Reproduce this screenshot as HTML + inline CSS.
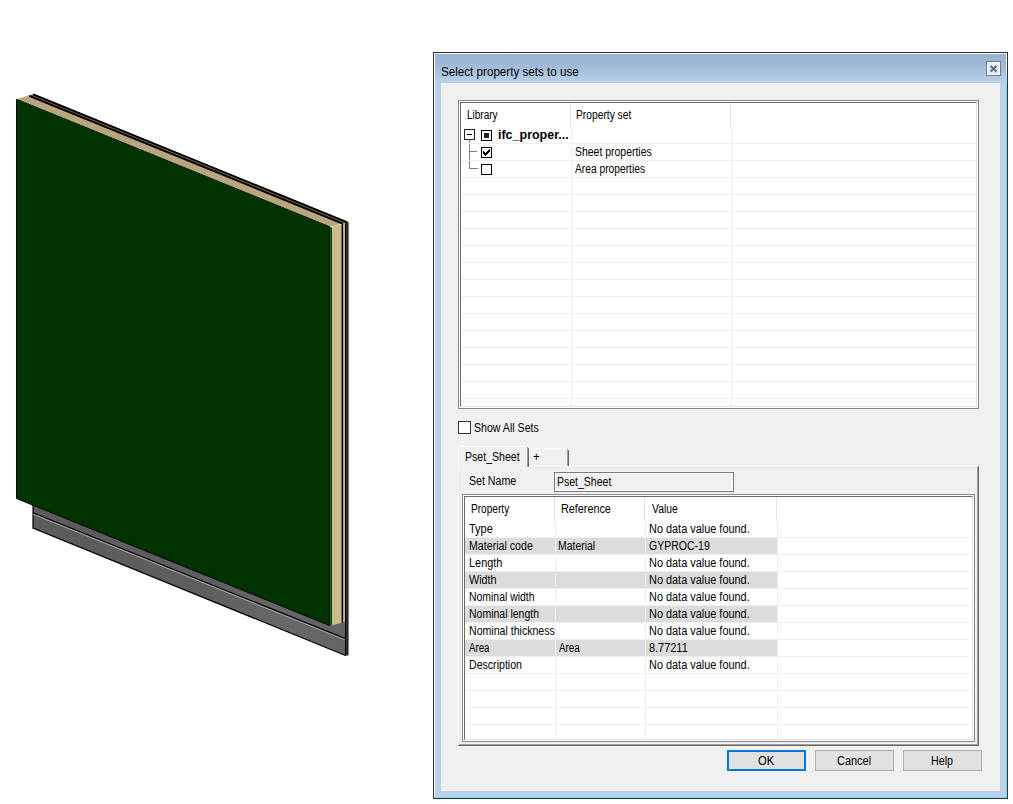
<!DOCTYPE html>
<html><head><meta charset="utf-8"><title>Select property sets to use</title>
<style>
html,body{margin:0;padding:0;background:#fff;}
body{width:1013px;height:804px;position:relative;overflow:hidden;font-family:"Liberation Sans",sans-serif;font-size:11px;color:#000;}
.a{position:absolute;}
.t{position:absolute;white-space:nowrap;line-height:13px;height:13px;font-size:12px;transform-origin:0 0;}
.hl{position:absolute;height:1px;background:#efefef;}
.vl{position:absolute;width:1px;background:#efefef;}
.hd{position:absolute;width:1px;background:#e5e5e5;}
.cb{position:absolute;box-sizing:border-box;border:1px solid #000;background:#fff;}
.btn{position:absolute;box-sizing:border-box;width:79px;height:21px;top:750px;background:#e1e1e1;border:1px solid #adadad;}
.sh{position:absolute;left:465px;width:312px;height:16px;background:#dcdcdc;}
</style></head><body>
<svg class="a" style="left:0;top:0" width="430" height="804" viewBox="0 0 430 804">
<defs>
<linearGradient id="rg" x1="0" y1="0" x2="1" y2="0"><stop offset="0" stop-color="#5c5c5c"/><stop offset="0.55" stop-color="#5e5e5e"/><stop offset="0.8" stop-color="#686868"/><stop offset="1" stop-color="#636363"/></linearGradient>
</defs>
<!-- rail -->
<polygon points="33,500 345.5,618 345.5,655.5 33,528" fill="url(#rg)"/>
<polyline points="33,503 33,528 345.5,655.5" fill="none" stroke="#000" stroke-width="1.2" stroke-linejoin="miter"/>
<line x1="33" y1="512.8" x2="345.5" y2="638.6" stroke="#000" stroke-width="1.2"/>
<line x1="33" y1="514.2" x2="345.5" y2="640.1" stroke="#a8a8a8" stroke-width="1"/>
<!-- right black edge -->
<polygon points="345,221 348.6,222.4 348.6,655.6 345,655.6" fill="#2a2a2a"/>
<rect x="345" y="222" width="1" height="433.6" fill="#000"/>
<!-- top face -->
<polygon points="16.5,99.2 34,94 348,222 330,227" fill="#b9a57e"/>
<polygon points="28.3,95.9 34,94 348,222 342.3,223.9" fill="#6b5f48"/>
<line x1="29.2" y1="95.8" x2="343.2" y2="223.8" stroke="#000" stroke-width="1.8"/>
<line x1="33.2" y1="94.3" x2="347.4" y2="222.4" stroke="#000" stroke-width="1.8"/>
<!-- side face -->
<polygon points="330,227.3 342.5,223.8 342.5,622.5 330,626" fill="#cfb98f"/>
<polygon points="342.5,223.8 345,223 345,621.6 342.5,622.5" fill="#cfb98f"/>
<rect x="341.6" y="224" width="1.5" height="398.6" fill="#000"/>
<rect x="330" y="227.4" width="1" height="398.4" fill="#007200"/>
<rect x="331" y="227.6" width="1" height="398" fill="#0b4a0b"/>
<!-- green face -->
<polygon points="16.5,99.3 329.5,226.7 329.5,625.5 16.5,498.5" fill="#003300" stroke="#000" stroke-width="1" stroke-linejoin="miter"/>
<line x1="17" y1="99.6" x2="329.5" y2="226.9" stroke="#008800" stroke-width="0.9" stroke-dasharray="1.2 2.6"/>
</svg>
<div class="a" style="left:433px;top:52px;width:575px;height:747px;background:#333"></div>
<div class="a" style="left:434px;top:53px;width:573px;height:745px;background:linear-gradient(#fff 0,#fff 6px,#6fdcfa 34px)"></div>
<div class="a" style="left:434px;top:53px;width:572px;height:744px;background:#fff"></div>
<div class="a" style="left:435px;top:54px;width:571px;height:743px;background:#b9d1ea"></div>
<div class="a" style="left:435px;top:54px;width:571px;height:30px;background:linear-gradient(#99b4d1,#9bb6d4 8px,#b9d1ea 29px)"></div>
<div class="a" style="left:441px;top:83px;width:559px;height:708px;background:#f0f0f0"></div>
<div class="t" id="title" style="left:441.02px;top:65px;transform:scaleX(0.9695);font-size:12px;line-height:15px;height:15px;">Select property sets to use</div>
<!-- close button -->
<div class="a" style="left:986px;top:61px;width:15px;height:15px;box-sizing:border-box;border:1px solid #6b7b8c;background:#fff"></div>
<div class="a" style="left:988px;top:63px;width:11px;height:11px;background:linear-gradient(#e8f1fa,#d9e7f6)"></div>
<svg class="a" style="left:986px;top:61px" width="15" height="15" viewBox="0 0 15 15"><path d="M4.6 4.9 L10.4 10.4 M10.4 4.9 L4.6 10.4" stroke="#5f6e7e" stroke-width="2.1" stroke-linecap="butt" fill="none"/></svg>
<div class="a" style="left:458px;top:100px;width:521px;height:309px;box-sizing:border-box;border:1px solid #828790;background:#fff"></div>
<div class="a" style="left:460px;top:102px;width:517px;height:305px;box-sizing:border-box;border:1px solid;border-color:#696969 #e3e3e3 #e3e3e3 #696969"></div>
<div class="a" style="left:469px;top:139px;width:1px;height:30px;background:#808080"></div>
<div class="a" style="left:469px;top:151px;width:8px;height:1px;background:#808080"></div>
<div class="a" style="left:469px;top:168px;width:9px;height:1px;background:#808080"></div>
<div class="hl" style="left:461px;top:143px;width:515px"></div><div class="hl" style="left:461px;top:160px;width:515px"></div><div class="hl" style="left:461px;top:177px;width:515px"></div><div class="hl" style="left:461px;top:194px;width:515px"></div><div class="hl" style="left:461px;top:211px;width:515px"></div><div class="hl" style="left:461px;top:228px;width:515px"></div><div class="hl" style="left:461px;top:245px;width:515px"></div><div class="hl" style="left:461px;top:262px;width:515px"></div><div class="hl" style="left:461px;top:279px;width:515px"></div><div class="hl" style="left:461px;top:296px;width:515px"></div><div class="hl" style="left:461px;top:313px;width:515px"></div><div class="hl" style="left:461px;top:330px;width:515px"></div><div class="hl" style="left:461px;top:347px;width:515px"></div><div class="hl" style="left:461px;top:364px;width:515px"></div><div class="hl" style="left:461px;top:381px;width:515px"></div><div class="hl" style="left:461px;top:398px;width:515px"></div><div class="hd" style="left:570px;top:103px;height:24px"></div><div class="hd" style="left:730px;top:103px;height:24px"></div><div class="vl" style="left:571px;top:127px;height:279px"></div><div class="vl" style="left:731px;top:127px;height:279px"></div>
<div class="t" id="h_lib" style="left:466.81px;top:109px;transform:scaleX(0.8338);">Library</div>
<div class="t" id="h_ps" style="left:576.40px;top:109px;transform:scaleX(0.8549);">Property set</div>
<!-- tree -->
<div class="cb" style="left:464px;top:129px;width:11px;height:11px;border-color:#222"></div>
<div class="a" style="left:467px;top:134px;width:5px;height:1px;background:#000"></div>
<div class="cb" style="left:481px;top:130px;width:11px;height:11px"></div>
<div class="a" style="left:484px;top:133px;width:5px;height:5px;background:#222"></div>
<div class="cb" style="left:481px;top:147px;width:11px;height:11px"></div>
<svg class="a" style="left:481px;top:147px" width="11" height="11" viewBox="0 0 11 11"><path d="M2 4h1v3h-1z M3 5h1v3h-1z M4 6h1v3h-1z M5 5h1v3h-1z M6 4h1v3h-1z M7 3h1v3h-1z M8 2h1v3h-1z" fill="#000"/></svg>
<div class="cb" style="left:481px;top:164px;width:11px;height:11px"></div>
<div class="t" id="ifc" style="left:498.01px;top:129px;transform:scaleX(1.0400);font-weight:bold;">ifc_proper...</div>
<div class="t" id="sp" style="left:574.87px;top:146px;transform:scaleX(0.8713);">Sheet properties</div>
<div class="t" id="ap" style="left:574.93px;top:163px;transform:scaleX(0.8540);">Area properties</div>
<div class="cb" style="left:458px;top:421px;width:13px;height:13px;border-color:#333"></div>
<div class="t" id="sas" style="left:474.06px;top:422px;transform:scaleX(0.8828);">Show All Sets</div>
<!-- tab page -->
<div class="a" style="left:529px;top:466px;width:449px;height:1px;background:#fff"></div>
<div class="a" style="left:529px;top:467px;width:448px;height:1px;background:#e6e6e6"></div>
<div class="a" style="left:458px;top:448px;width:1px;height:297px;background:#fff"></div>
<div class="a" style="left:459px;top:467px;width:1px;height:277px;background:#e6e6e6"></div>
<div class="a" style="left:459px;top:744px;width:519px;height:1px;background:#a0a0a0"></div>
<div class="a" style="left:458px;top:745px;width:521px;height:1px;background:#696969"></div>
<div class="a" style="left:977px;top:467px;width:1px;height:278px;background:#a0a0a0"></div>
<div class="a" style="left:978px;top:466px;width:1px;height:280px;background:#696969"></div>
<!-- selected tab -->
<div class="a" style="left:459px;top:447px;width:68px;height:21px;background:#f0f0f0"></div>
<div class="a" style="left:460px;top:446px;width:67px;height:1px;background:#fff"></div>
<div class="a" style="left:459px;top:447px;width:1px;height:1px;background:#fff"></div>
<div class="a" style="left:527px;top:447px;width:1px;height:20px;background:#a0a0a0"></div>
<div class="a" style="left:528px;top:448px;width:1px;height:19px;background:#696969"></div>
<!-- second tab -->
<div class="a" style="left:529px;top:448px;width:38px;height:1px;background:#fff"></div>
<div class="a" style="left:567px;top:449px;width:1px;height:17px;background:#a0a0a0"></div>
<div class="a" style="left:568px;top:450px;width:1px;height:16px;background:#696969"></div>
<div class="t" id="tab1" style="left:465.09px;top:451px;transform:scaleX(0.8803);">Pset_Sheet</div>
<div class="t" id="tab2" style="left:533.04px;top:451px;transform:scaleX(0.9500);">+</div>
<div class="t" id="sn" style="left:469.08px;top:475px;transform:scaleX(0.8842);">Set Name</div>
<div class="a" style="left:554px;top:472px;width:180px;height:20px;box-sizing:border-box;border:1px solid #7a7a7a;background:#f0f0f0;box-shadow:inset 0 0 0 1px #fff"></div>
<div class="t" id="snv" style="left:556.81px;top:476px;transform:scaleX(0.8754);">Pset_Sheet</div>
<div class="a" style="left:462px;top:494px;width:513px;height:248px;box-sizing:border-box;border:1px solid #828790;background:#fff"></div>
<div class="a" style="left:464px;top:496px;width:509px;height:244px;box-sizing:border-box;border:1px solid;border-color:#696969 #e3e3e3 #e3e3e3 #696969"></div>
<div class="sh" style="top:538px"></div><div class="sh" style="top:572px"></div><div class="sh" style="top:606px"></div><div class="sh" style="top:640px"></div><div class="hl" style="left:465px;top:537px;width:507px"></div><div class="hl" style="left:465px;top:554px;width:507px"></div><div class="hl" style="left:465px;top:571px;width:507px"></div><div class="hl" style="left:465px;top:588px;width:507px"></div><div class="hl" style="left:465px;top:605px;width:507px"></div><div class="hl" style="left:465px;top:622px;width:507px"></div><div class="hl" style="left:465px;top:639px;width:507px"></div><div class="hl" style="left:465px;top:656px;width:507px"></div><div class="hl" style="left:465px;top:673px;width:507px"></div><div class="hl" style="left:465px;top:690px;width:507px"></div><div class="hl" style="left:465px;top:707px;width:507px"></div><div class="hl" style="left:465px;top:724px;width:507px"></div><div class="hd" style="left:554px;top:497px;height:24px"></div><div class="vl" style="left:555px;top:521px;height:218px"></div><div class="hd" style="left:644px;top:497px;height:24px"></div><div class="vl" style="left:645px;top:521px;height:218px"></div><div class="hd" style="left:776px;top:497px;height:24px"></div><div class="vl" style="left:777px;top:521px;height:218px"></div>
<div class="t" id="h_p" style="left:470.80px;top:503px;transform:scaleX(0.8429);">Property</div>
<div class="t" id="h_r" style="left:560.99px;top:503px;transform:scaleX(0.9005);">Reference</div>
<div class="t" id="h_v" style="left:651.59px;top:503px;transform:scaleX(0.8650);">Value</div>
<div class="t" id="p0" style="left:469.07px;top:523px;transform:scaleX(0.9149);">Type</div>
<div class="t" id="v0" style="left:649.09px;top:523px;transform:scaleX(0.9094);">No data value found.</div>
<div class="t" id="p1" style="left:468.76px;top:540px;transform:scaleX(0.8862);">Material code</div>
<div class="t" id="r1" style="left:558.25px;top:540px;transform:scaleX(0.8707);">Material</div>
<div class="t" id="v1" style="left:648.81px;top:540px;transform:scaleX(0.8762);">GYPROC-19</div>
<div class="t" id="p2" style="left:468.74px;top:557px;transform:scaleX(0.9086);">Length</div>
<div class="t" id="v2" style="left:649.09px;top:557px;transform:scaleX(0.9094);">No data value found.</div>
<div class="t" id="p3" style="left:468.80px;top:574px;transform:scaleX(0.9008);">Width</div>
<div class="t" id="v3" style="left:649.09px;top:574px;transform:scaleX(0.9094);">No data value found.</div>
<div class="t" id="p4" style="left:468.57px;top:591px;transform:scaleX(0.8694);">Nominal width</div>
<div class="t" id="v4" style="left:649.09px;top:591px;transform:scaleX(0.9094);">No data value found.</div>
<div class="t" id="p5" style="left:468.77px;top:608px;transform:scaleX(0.8741);">Nominal length</div>
<div class="t" id="v5" style="left:649.09px;top:608px;transform:scaleX(0.9094);">No data value found.</div>
<div class="t" id="p6" style="left:468.76px;top:625px;transform:scaleX(0.8812);">Nominal thickness</div>
<div class="t" id="v6" style="left:649.09px;top:625px;transform:scaleX(0.9094);">No data value found.</div>
<div class="t" id="p7" style="left:469.06px;top:642px;transform:scaleX(0.8079);">Area</div>
<div class="t" id="r7" style="left:559.15px;top:642px;transform:scaleX(0.8158);">Area</div>
<div class="t" id="v7" style="left:649.00px;top:642px;transform:scaleX(0.9115);">8.77211</div>
<div class="t" id="p8" style="left:468.76px;top:659px;transform:scaleX(0.8824);">Description</div>
<div class="t" id="v8" style="left:649.09px;top:659px;transform:scaleX(0.9094);">No data value found.</div>
<div class="btn" style="left:727px;border:2px solid #0078d7"></div>
<div class="btn" style="left:815px"></div>
<div class="btn" style="left:903px"></div>
<div class="t" id="b_ok" style="left:758.03px;top:755px;transform:scaleX(0.9394);">OK</div>
<div class="t" id="b_ca" style="left:837.04px;top:755px;transform:scaleX(0.9139);">Cancel</div>
<div class="t" id="b_he" style="left:930.76px;top:755px;transform:scaleX(0.8903);">Help</div>
</body></html>
